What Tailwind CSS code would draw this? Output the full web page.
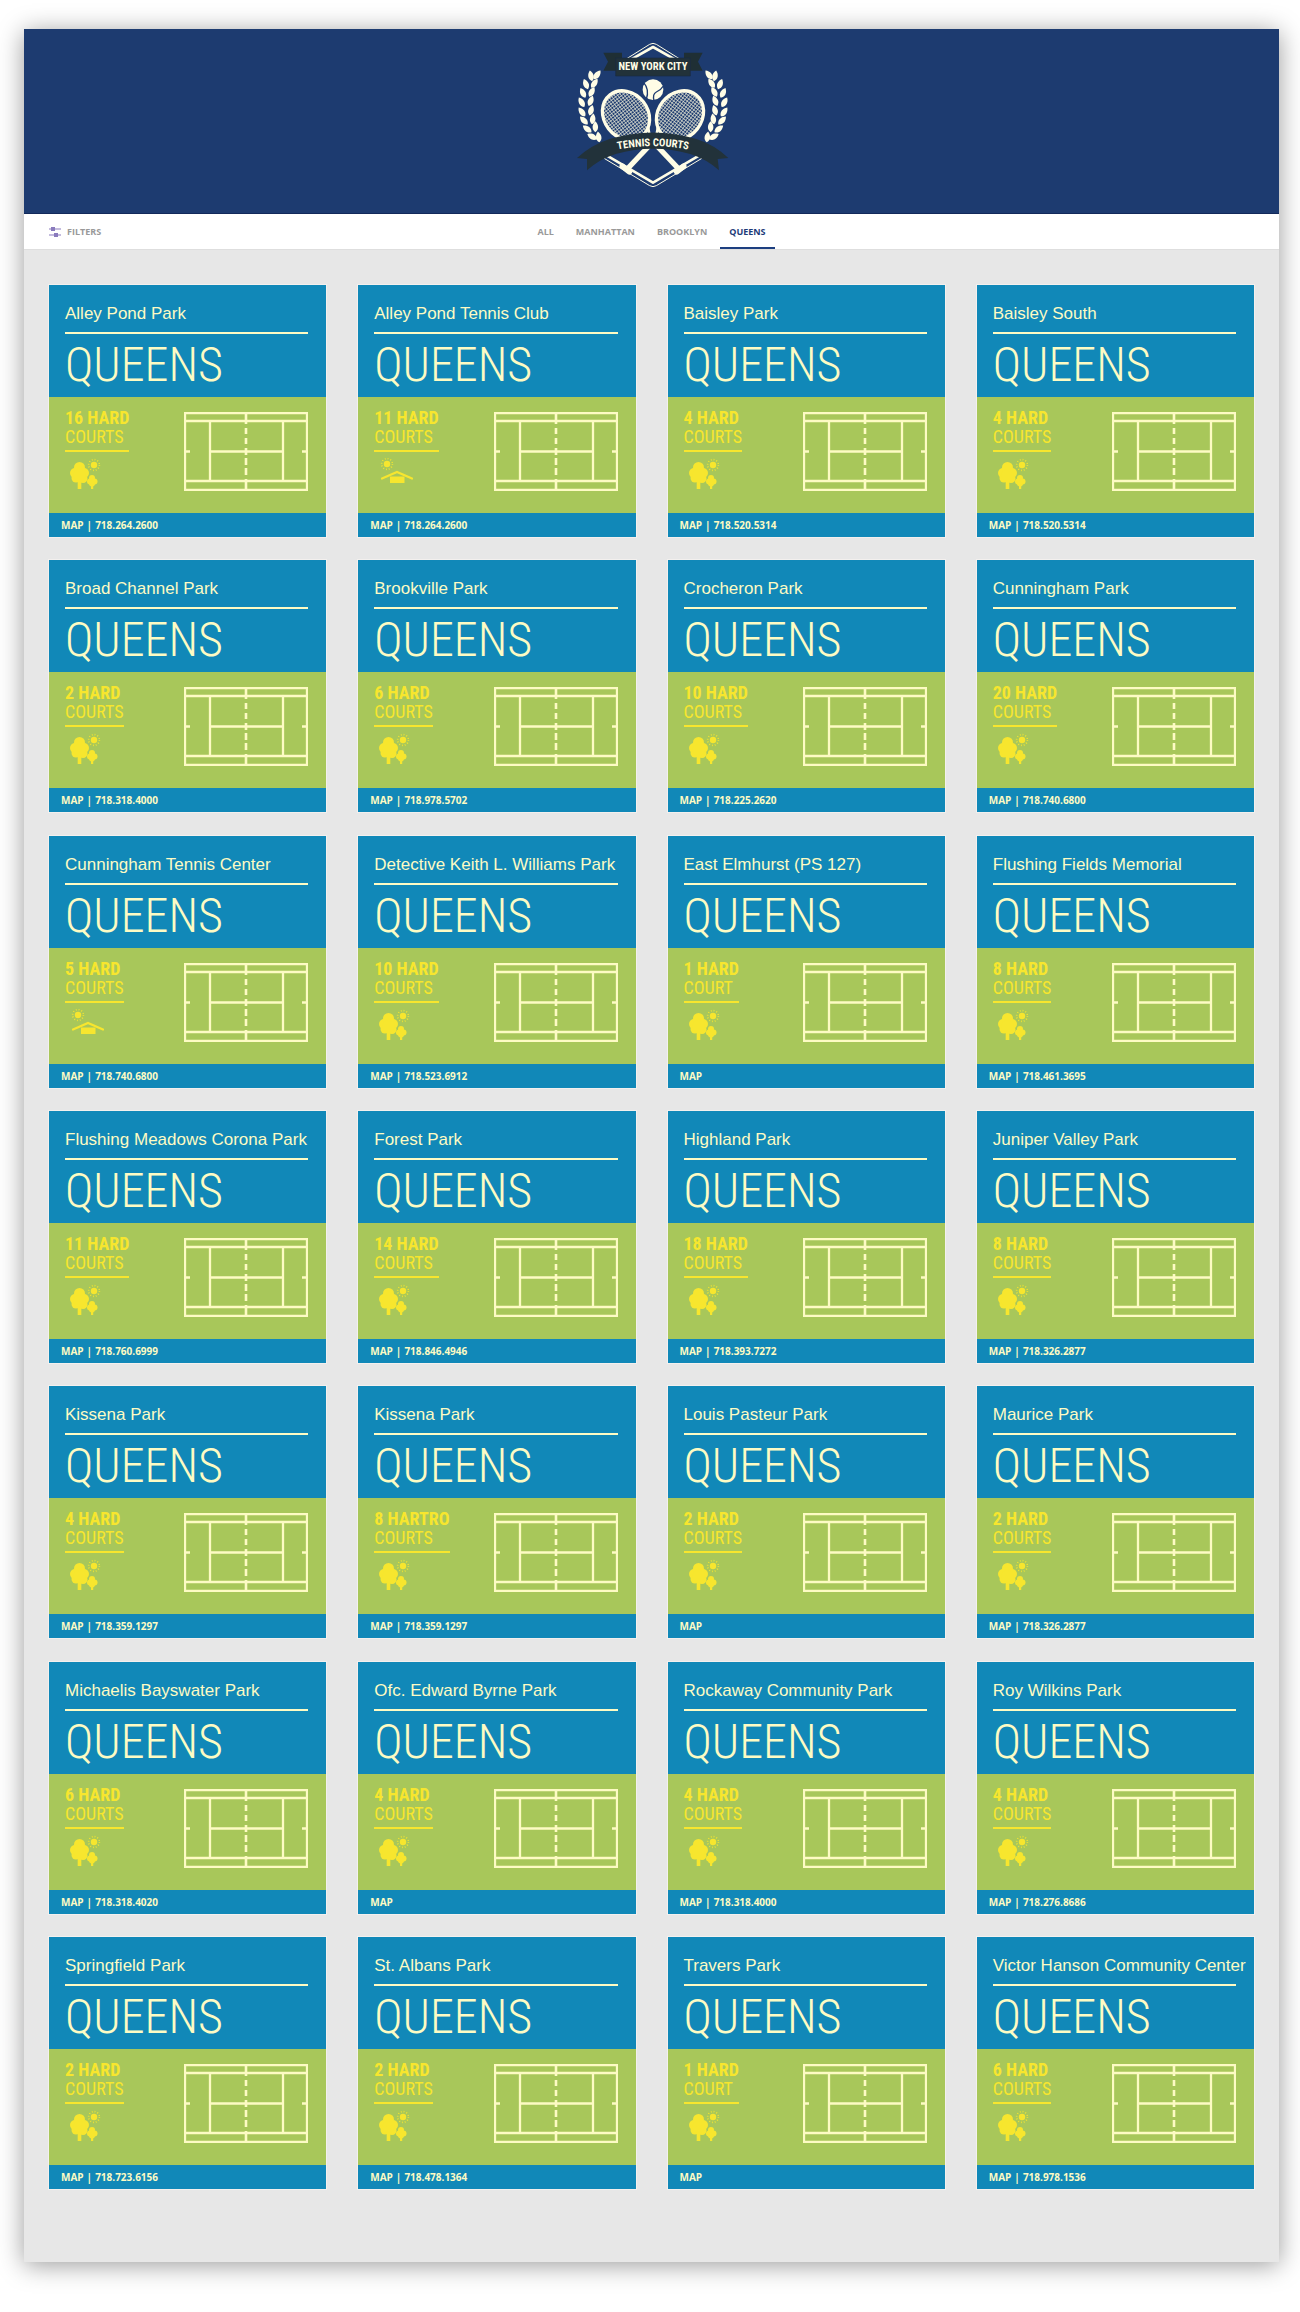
<!DOCTYPE html>
<html lang="en">
<head>
<meta charset="utf-8">
<meta name="viewport" content="width=device-width, initial-scale=1">
<title>New York City Tennis Courts – Queens</title>
<script src="https://cdn.jsdelivr.net/npm/@tailwindcss/browser@4"></script>
</head>
<body class="bg-white pt-[29px] pb-[50px] pl-6 pr-[21px] font-['Open_Sans',sans-serif]">

<svg class="hidden" aria-hidden="true">
  <defs>
    <symbol id="court" viewBox="0 0 124 79">
      <g fill="none" stroke="#fdfbc4" stroke-width="2.300">
        <path d="M1 1H123V78H1ZM1 9H123M1 69H123M26 9V69M99 9V69M26 39.500H99M0 39.500H6M118 39.500H124"/>
        <path d="M62 0V12M62 16V22M62 26V32M62 36V43M62 46V53M62 56V63M62 67V79" stroke-width="2.600"/>
      </g>
    </symbol>
    <symbol id="sun" viewBox="-7 -7 14 14">
      <circle r="3.200" fill="#f7e62e"/>
      <circle r="5.400" fill="none" stroke="#f7e62e" stroke-width="1.600" stroke-dasharray=".8 2.027"/>
    </symbol>
    <symbol id="outdoor" viewBox="0 0 36 32">
      <g fill="#f7e62e">
        <circle cx="10.500" cy="9.500" r="5.500"/><circle cx="6" cy="15" r="5"/><circle cx="15" cy="15" r="5"/>
        <circle cx="7" cy="20" r="4.500"/><circle cx="14" cy="20.500" r="4.500"/><circle cx="10.500" cy="17" r="6"/>
        <rect x="8.700" y="20" width="3.600" height="11"/>
        <circle cx="23" cy="20" r="3"/><circle cx="21" cy="23.500" r="3"/><circle cx="25.500" cy="23.500" r="3"/><circle cx="23" cy="25.500" r="3"/>
        <rect x="22" y="25" width="2.200" height="6"/>
      </g>
      <use href="#sun" x="18" y="0" width="14" height="14"/>
    </symbol>
    <symbol id="indoor" viewBox="0 0 36 32">
      <use href="#sun" x="2" y="-1" width="14" height="14"/>
      <path d="M4 20.500L19 14L34 20.500" fill="none" stroke="#f7e62e" stroke-width="2.200" stroke-linecap="round"/>
      <rect x="12" y="18.500" width="14.500" height="6.500" fill="#f7e62e"/>
    </symbol>
  </defs>
</svg>

<div class="bg-[#e7e7e7] shadow-[0_3px_24px_rgba(0,0,0,0.4)]">

  <header class="flex justify-center border-b border-[#12295a] bg-[#1d3b70] pb-[13px]">
    <a href="#" aria-label="New York City Tennis Courts">
      <svg class="block h-[171px] w-[190px]" viewBox="-10 -3 570 513">
        <defs>
          <pattern id="strings" width="8" height="8" patternUnits="userSpaceOnUse">
            <path d="M0 1H8M1 0V8" stroke="#e8e9d4" stroke-width="2.200"/>
          </pattern>
          <path id="leaf" d="M0 16C-12 7-10-7 0-17C10-7 12 7 0 16Z" fill="#fffde6"/>
          <g id="laurel">
            <use href="#leaf" transform="translate(92 138) rotate(-12)"/>
            <use href="#leaf" transform="translate(77 163) rotate(-22)"/>
            <use href="#leaf" transform="translate(68 189) rotate(-26)"/>
            <use href="#leaf" transform="translate(64 217) rotate(-30)"/>
            <use href="#leaf" transform="translate(65 246) rotate(-36)"/>
            <use href="#leaf" transform="translate(71 272) rotate(-44)"/>
            <use href="#leaf" transform="translate(81 297) rotate(-52)"/>
            <use href="#leaf" transform="translate(96 320) rotate(-62)"/>
            <use href="#leaf" transform="translate(110 135) rotate(38)"/>
            <use href="#leaf" transform="translate(102 160) rotate(34)"/>
            <use href="#leaf" transform="translate(94 186) rotate(28)"/>
            <use href="#leaf" transform="translate(91 213) rotate(22)"/>
            <use href="#leaf" transform="translate(92 241) rotate(16)"/>
            <use href="#leaf" transform="translate(97 267) rotate(8)"/>
            <use href="#leaf" transform="translate(105 291) rotate(0)"/>
            <use href="#leaf" transform="translate(115 321) rotate(-8)"/>
          </g>
          <g id="racket">
            <g transform="translate(197 256) rotate(-38)">
              <ellipse rx="66" ry="78" fill="url(#strings)" stroke="#fffde6" stroke-width="10"/>
              <path d="M-32 66L-7 112M32 66L7 112" stroke="#fffde6" stroke-width="8"/>
            </g>
            <path d="M262 318L358 420" stroke="#fffde6" stroke-width="16"/>
            <path d="M349 425L370 409" stroke="#fffde6" stroke-width="17" stroke-linecap="round"/>
          </g>
        </defs>
        <g fill="none" stroke="#fffde6" stroke-linejoin="round">
          <path d="M196 88L268 43Q278 37 288 43L360 88" stroke-width="3"/>
          <path d="M206 92L278 51L350 92" stroke-width="8"/>
          <path d="M128 383L268 467Q278 473 288 467L428 383" stroke-width="3"/>
          <path d="M140 377L278 458L416 377" stroke-width="8"/>
        </g>
        <use href="#laurel"/>
        <use href="#laurel" transform="translate(556 0) scale(-1 1)"/>
        <use href="#racket"/>
        <use href="#racket" transform="translate(556 0) scale(-1 1)"/>
        <circle cx="278" cy="179" r="31" fill="#fffde6"/>
        <path d="M250 158Q268 178 258 208M309 168Q302 180 288 186Q276 192 281 212" fill="none" stroke="#1d3b70" stroke-width="4"/>
        <path d="M129 68H185V122H129L143 95ZM427 68H371V122H427L413 95Z" fill="#1f2f35"/>
        <path d="M166 84H390V138H166Z" fill="#22323a" stroke="#1a2a44" stroke-width="2"/>
        <path d="M50 384Q94 344 148 327Q278 288 408 327Q462 344 504 384L472 387L476 421Q440 388 390 372Q278 340 166 372Q116 388 80 421L80 387Z" fill="#22323a"/>
        <text x="278" y="119" text-anchor="middle" class="fill-[#fffde6] font-['Roboto_Condensed',sans-serif] text-[32px] font-bold">NEW YORK CITY</text>
        <path id="ribbon" d="M120 372Q278 324 436 372" fill="none"/>
        <text text-anchor="middle" class="fill-[#fffde6] font-['Roboto_Condensed',sans-serif] text-[32px] font-bold"><textPath href="#ribbon" startOffset="50%">TENNIS COURTS</textPath></text>
      </svg>
    </a>
  </header>

  <div class="grid h-9 grid-cols-[1fr_auto_1fr] items-stretch border-b border-[#dedede] bg-white px-[25px] text-[9px] font-bold leading-4 text-[#999999]">
    <button type="button" class="flex items-center gap-[6px] justify-self-start">
      <svg class="h-3 w-3" viewBox="0 0 12 12" aria-hidden="true">
        <path d="M0 3H12M0 9H12" stroke="#8a7bbd" stroke-width="1.200"/>
        <path d="M2 1H6V5H2ZM5 7H9V11H5Z" fill="#8a7bbd"/>
      </svg>
      FILTERS
    </button>
    <nav class="flex gap-1" aria-label="Borough">
      <a href="#all" class="flex items-center border-y-2 border-transparent px-[9px]">ALL</a>
      <a href="#manhattan" class="flex items-center border-y-2 border-transparent px-[9px]">MANHATTAN</a>
      <a href="#brooklyn" class="flex items-center border-y-2 border-transparent px-[9px]">BROOKLYN</a>
      <a href="#queens" aria-current="page" class="flex items-center border-y-2 border-t-transparent border-b-[#1d3f80] px-[9px] text-[#1d3b78]">QUEENS</a>
    </nav>
  </div>

  <main id="cards" class="grid min-h-[2012px] grid-cols-4 content-between gap-x-8 px-[25px] pt-[35px] pb-[73px]"></main>
</div>

<script>
  // name | court count and surface | phone | setting (outdoor unless given)
  const courts = [
    ['Alley Pond Park', '16 HARD', '718.264.2600'],
    ['Alley Pond Tennis Club', '11 HARD', '718.264.2600', 'indoor'],
    ['Baisley Park', '4 HARD', '718.520.5314'],
    ['Baisley South', '4 HARD', '718.520.5314'],
    ['Broad Channel Park', '2 HARD', '718.318.4000'],
    ['Brookville Park', '6 HARD', '718.978.5702'],
    ['Crocheron Park', '10 HARD', '718.225.2620'],
    ['Cunningham Park', '20 HARD', '718.740.6800'],
    ['Cunningham Tennis Center', '5 HARD', '718.740.6800', 'indoor'],
    ['Detective Keith L. Williams Park', '10 HARD', '718.523.6912'],
    ['East Elmhurst (PS 127)', '1 HARD', ''],
    ['Flushing Fields Memorial', '8 HARD', '718.461.3695'],
    ['Flushing Meadows Corona Park', '11 HARD', '718.760.6999'],
    ['Forest Park', '14 HARD', '718.846.4946'],
    ['Highland Park', '18 HARD', '718.393.7272'],
    ['Juniper Valley Park', '8 HARD', '718.326.2877'],
    ['Kissena Park', '4 HARD', '718.359.1297'],
    ['Kissena Park', '8 HARTRO', '718.359.1297'],
    ['Louis Pasteur Park', '2 HARD', ''],
    ['Maurice Park', '2 HARD', '718.326.2877'],
    ['Michaelis Bayswater Park', '6 HARD', '718.318.4020'],
    ['Ofc. Edward Byrne Park', '4 HARD', ''],
    ['Rockaway Community Park', '4 HARD', '718.318.4000'],
    ['Roy Wilkins Park', '4 HARD', '718.276.8686'],
    ['Springfield Park', '2 HARD', '718.723.6156'],
    ['St. Albans Park', '2 HARD', '718.478.1364'],
    ['Travers Park', '1 HARD', ''],
    ['Victor Hanson Community Center', '6 HARD', '718.978.1536'],
  ];

  document.getElementById('cards').innerHTML = courts.map(([name, count, phone, setting = 'outdoor']) => `
    <article class="min-w-0 bg-[#1188b8] text-[#fdfbc4] outline outline-[#f3f0ee]">
      <div class="h-28 pr-[18px] pl-4 pt-[18px]">
        <h2 class="border-b-2 border-[#fdfbc4] pb-[7px] font-['Liberation_Sans',sans-serif] text-[17px] leading-[22px] whitespace-nowrap">${name}</h2>
        <p class="font-['Roboto_Condensed',sans-serif] text-[48px] leading-[62px] font-light">QUEENS</p>
      </div>
      <div class="flex h-[116px] items-start justify-between bg-[#a8c75a] pr-[18px] pl-4 pt-[11px] text-[#f7e62e]">
        <div>
          <p class="inline-block border-b-2 border-[#f7e62e] pb-1 font-['Roboto_Condensed',sans-serif] text-[18px] leading-[19px]"><b>${count}</b><br>${count.startsWith('1 ') ? 'COURT' : 'COURTS'}</p>
          <svg class="mt-[6px] ml-1 h-8 w-9" role="img" aria-label="${setting}"><use href="#${setting}"/></svg>
        </div>
        <svg class="mt-1 h-[79px] w-[124px]" aria-hidden="true"><use href="#court"/></svg>
      </div>
      <footer class="flex h-6 items-center gap-[3px] px-3 text-[10px] leading-4 font-bold">
        <a href="#map">MAP</a>${phone ? `<span>|</span><a href="tel:${phone}">${phone}</a>` : ''}
      </footer>
    </article>`).join('');
</script>
</body>
</html>
